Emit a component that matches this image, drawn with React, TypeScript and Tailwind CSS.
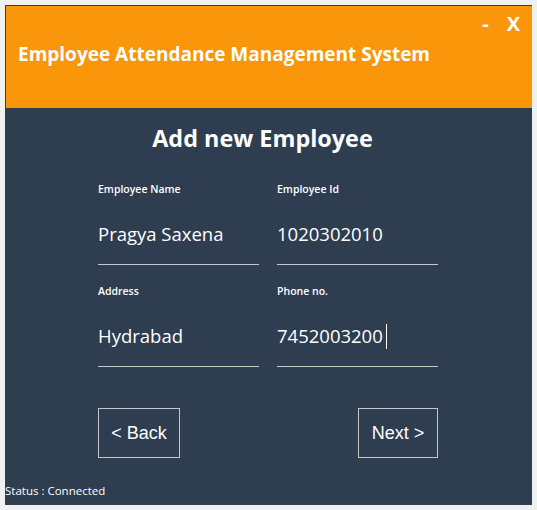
const Field = ({ label, value, caret }: { label: string; value: string; caret?: boolean }) => {
  return (
    <div className="w-[161px]">
      <div className="text-[10.5px] font-semibold leading-[14px] text-white">{label}</div>
      <div className="mt-[23px] h-[30px] flex items-center text-[18.5px] leading-[24px] text-white">
        {value}
        {caret && <span className="inline-block w-px h-[25px] bg-white ml-[3px]" />}
      </div>
      <div className="mt-[15px] h-px bg-[#c8c8c8]" />
    </div>
  )
}

const App = () => {
  return (
    <div className="w-[537px] h-[510px] bg-[#f0f0f0] pt-[5px] pl-[5px]" style={{ fontFamily: '"Open Sans", "Noto Sans", sans-serif' }}>
      <div className="w-[527px] h-[500px] border-t border-l border-[#2e3d50] bg-[#2e3d50] flex flex-col">
        <div className="h-[102px] bg-[#f9960a] relative">
          <h1 className="pt-[36px] pl-[12px] text-[19px] font-bold leading-[24px] text-white">
            Employee Attendance Management System
          </h1>
          <div className="absolute top-[5px] right-[12px] flex gap-[18px] text-[20px] font-bold text-white leading-[26px]">
            <span>-</span>
            <span>X</span>
          </div>
        </div>
        <div className="flex-1 relative">
          <h2 className="mt-[15px] text-center text-[23.4px] font-bold leading-[30px] text-white pr-[13px]">
            Add new Employee
          </h2>
          <div className="mt-[29px] ml-[92px] grid grid-cols-[161px_161px] gap-x-[18px] gap-y-[19px]">
            <Field label="Employee Name" value="Pragya Saxena" />
            <Field label="Employee Id" value="1020302010" />
            <Field label="Address" value="Hydrabad" />
            <Field label="Phone no." value="7452003200" caret />
          </div>
          <div className="mt-[41px] ml-[92px] w-[340px] flex justify-between" style={{ fontFamily: '"Liberation Sans", Arial, sans-serif' }}>
            <button className="w-[82px] h-[50px] border border-[#c8c8c8] text-white text-[18px]">&lt; Back</button>
            <button className="w-[80px] h-[50px] border border-[#c8c8c8] text-white text-[18px]">Next &gt;</button>
          </div>
          <div className="absolute left-[-1px] bottom-[7px] text-[11.5px] leading-[14px] text-white">Status : Connected</div>
        </div>
      </div>
    </div>
  )
}

export default App
